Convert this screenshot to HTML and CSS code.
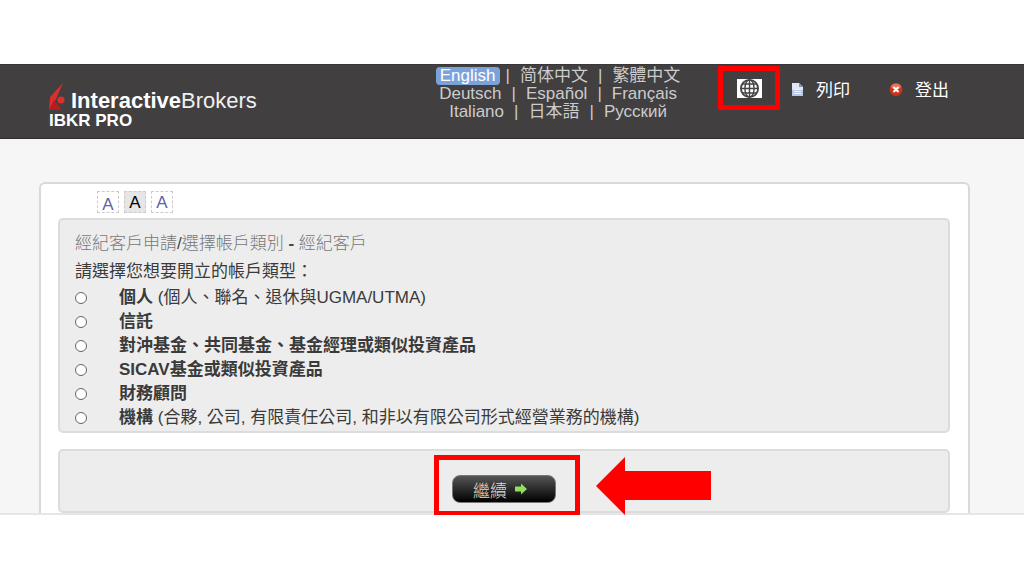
FILE: index.html
```html
<!DOCTYPE html>
<html lang="zh-Hant">
<head>
    <meta charset="UTF-8">
    <meta name="viewport" content="width=device-width, initial-scale=1.0">
    <title>InteractiveBrokers</title>
    <link rel="stylesheet" href="styles.css">
</head>
<body>
    <div class="app">
        <header class="header">
            <div class="logo">
                <div class="logo-main">
                    <svg class="logo-mark" viewBox="0 0 18 30" width="18" height="30">
                        <path d="M14 1 L1 15 L0 28 L7 17 Z" fill="#d8302f"/>
                        <path d="M0 28 L5 18 L13 28 Z" fill="#b51d20"/>
                        <circle cx="12" cy="18" r="3.6" fill="#d8302f"/>
                    </svg>
                    <span class="logo-text"><b>Interactive</b>Brokers</span>
                </div>
                <div class="logo-sub">IBKR PRO</div>
            </div>
            <nav class="languages">
                <div><a href="#" class="active">English</a><i>|</i><a href="#" lang="zh-Hans">简体中文</a><i>|</i><a href="#">繁體中文</a></div>
                <div><a href="#">Deutsch</a><i>|</i><a href="#">Español</a><i>|</i><a href="#">Français</a></div>
                <div><a href="#">Italiano</a><i>|</i><a href="#" lang="ja">日本語</a><i>|</i><a href="#">Русский</a></div>
            </nav>
            <div class="tools">
                <button type="button" class="globe" aria-label="Language">
                    <svg viewBox="0 0 25 19" width="25" height="19" fill="none" stroke="#444" stroke-width="1.4">
                        <circle cx="12.5" cy="9.5" r="8.6" stroke-width="1.8"/>
                        <ellipse cx="12.5" cy="9.5" rx="4.6" ry="8.6"/>
                        <path d="M12.5 1 V18 M4 9.5 H21 M5 5 H20 M5 14 H20"/>
                    </svg>
                    <span class="frame"></span>
                </button>
                <a href="#" class="tool print">
                    <svg viewBox="0 0 13 15" width="13" height="15">
                        <path d="M1 2 H8 L12 6 V15 H1 Z" fill="#dfe6f4"/>
                        <path d="M1 9 H12 V15 H1 Z" fill="#b9c7e4"/>
                        <path d="M8 2 V6 H12 Z" fill="#7f93bd"/>
                        <path d="M3 8.5 H9 M3 10.5 H10 M3 12.5 H10" stroke="#eef2fa" stroke-width="1"/>
                    </svg>
                    列印
                </a>
                <a href="#" class="tool logout">
                    <svg viewBox="0 0 14 15" width="14" height="15">
                        <circle cx="7" cy="8.5" r="6.5" fill="#c9351c"/>
                        <ellipse cx="7" cy="5.5" rx="5" ry="3" fill="#e2745a"/>
                        <path d="M4.5 6 L9.5 11 M9.5 6 L4.5 11" stroke="#fff" stroke-width="2"/>
                    </svg>
                    登出
                </a>
            </div>
        </header>

        <main class="content">
            <div class="font-sizes">
                <button type="button" class="small">A</button>
                <button type="button" class="selected">A</button>
                <button type="button">A</button>
            </div>

            <form action="#" method="post">
                <div class="panel types">
                    <div class="breadcrumb">經紀客戶申請<span>/</span>選擇帳戶類別 <b>-</b> 經紀客戶</div>
                    <div class="question">請選擇您想要開立的帳戶類型：</div>
                    <div class="option">
                        <input type="radio" name="type" id="individual">
                        <label for="individual"><b>個人</b> (個人、聯名、退休與UGMA/UTMA)</label>
                    </div>
                    <div class="option">
                        <input type="radio" name="type" id="trust">
                        <label for="trust"><b>信託</b></label>
                    </div>
                    <div class="option">
                        <input type="radio" name="type" id="fund">
                        <label for="fund"><b>對沖基金、共同基金、基金經理或類似投資產品</b></label>
                    </div>
                    <div class="option">
                        <input type="radio" name="type" id="sicav">
                        <label for="sicav"><b>SICAV基金或類似投資產品</b></label>
                    </div>
                    <div class="option">
                        <input type="radio" name="type" id="advisor">
                        <label for="advisor"><b>財務顧問</b></label>
                    </div>
                    <div class="option">
                        <input type="radio" name="type" id="organization">
                        <label for="organization"><b>機構</b> (合夥, 公司, 有限責任公司, 和非以有限公司形式經營業務的機構)</label>
                    </div>
                </div>

                <div class="panel actions">
                    <div class="continue-box">
                        <button type="submit" class="continue">
                            繼續
                            <svg viewBox="0 0 12 12" width="12" height="12">
                                <path d="M0 3.5 H6 V0.5 L12 6 L6 11.5 V8.5 H0 Z" fill="#8fe05a"/>
                            </svg>
                        </button>
                        <span class="frame"></span>
                        <svg class="pointer" viewBox="0 0 115 58" width="115" height="58">
                            <path d="M0 29 L29 0 V14 H115 V43 H29 V58 Z" fill="#f00"/>
                        </svg>
                    </div>
                </div>
            </form>
        </main>
    </div>
</body>
</html>
```

FILE: styles.css
```css
* {
    box-sizing: border-box;
}

body {
    font-family: "Liberation Sans", "Noto Sans CJK TC", sans-serif;
    font-size: 17px;
    color: #3a3a3a;
    background-color: white;
    margin: 0;
    padding: 64px 0 0;
}

.app {
    background-color: #f6f6f6;
    border-bottom: 2px solid #e6e6e6;
    box-shadow: 0 3px 6px rgba(0, 0, 0, 0.08);
}

/* Header */
.header {
    display: grid;
    grid-template-columns: 42% 25% 1fr;
    height: 75px;
    background-color: #413f40;
    border-top: 1px solid #383637;
    border-bottom: 1px solid #2e2c2d;
}

.header a {
    text-decoration: none;
}

.logo {
    padding: 17px 0 0 49px;
    color: white;
}

.logo-main {
    display: flex;
    align-items: flex-end;
    gap: 4px;
    height: 30px;
}

.logo-text {
    font-size: 22px;
    line-height: 22px;
    color: #f0f0f0;
}

.logo-text b {
    color: white;
}

.logo-sub {
    font-weight: bold;
    line-height: 17px;
}

.languages {
    padding-top: 2px;
    text-align: center;
    white-space: nowrap;
    line-height: 18px;
}

.languages div {
    height: 18px;
}

.languages a,
.languages i {
    color: #ccc;
    font-style: normal;
}

.languages i {
    margin: 0 10px;
}

.languages [lang="zh-Hans"] {
    font-family: "Liberation Sans", "Noto Sans CJK SC", sans-serif;
}

.languages [lang="ja"] {
    font-family: "Liberation Sans", "Noto Sans CJK JP", sans-serif;
}

.languages .active {
    display: inline-block;
    height: 18px;
    padding: 0 4px;
    border-radius: 4px;
    background-color: #7ba3da;
    color: white;
}

.languages .active + i {
    margin-left: 6px;
}

.tools {
    display: flex;
    align-items: center;
    height: 47px;
    padding-left: 51px;
}

.globe {
    position: relative;
    display: flex;
    padding: 0;
    border: none;
    background-color: white;
}

.frame {
    position: absolute;
    border: 5px solid #f00;
}

.globe .frame {
    inset: -13px -18px -12px -19px;
}

.tool {
    display: flex;
    align-items: center;
    gap: 12px;
    color: white;
}

.print {
    margin-left: 29px;
}

.logout {
    margin-left: 39px;
}

/* Content */
.content {
    margin: 43px 54px 0 39px;
    padding: 7px 18px 0 17px;
    background-color: white;
    border: 2px solid #d9d9d9;
    border-bottom: none;
    border-radius: 6px 6px 0 0;
}

.font-sizes {
    display: flex;
    gap: 5px;
    padding-left: 39px;
    margin-bottom: 5px;
}

.font-sizes button {
    width: 22px;
    height: 22px;
    padding: 2px 0 0;
    border: 1px dashed #ccc;
    background-color: white;
    color: #5a66a5;
    font-family: inherit;
    font-size: 17px;
    line-height: 18px;
}

.font-sizes .small {
    padding-top: 6px;
    line-height: 14px;
}

.font-sizes .selected {
    background-color: #e6e6e6;
    color: black;
}

.panel {
    border: 2px solid #dcdcdc;
    border-radius: 5px;
    background-color: #ededed;
}

.types {
    padding: 10px 15px 1px;
    margin-bottom: 16px;
}

.breadcrumb {
    line-height: 28px;
    font-weight: 300;
    color: #777;
}

.breadcrumb span,
.breadcrumb b {
    color: #444;
}

.breadcrumb b {
    font-weight: bold;
}

.question {
    line-height: 28px;
}

.option {
    display: flex;
    align-items: center;
    gap: 32px;
    height: 24px;
    line-height: 24px;
}

.option input {
    appearance: none;
    width: 12px;
    height: 12px;
    margin: 0;
    border: 1px solid #666;
    border-radius: 50%;
    background-color: white;
}

.option input:checked {
    background-color: #333;
}

.actions {
    display: flex;
    justify-content: center;
    padding: 24px 0 8px;
}

.continue-box {
    position: relative;
}

.continue {
    display: flex;
    align-items: center;
    justify-content: center;
    gap: 8px;
    width: 104px;
    height: 28px;
    padding: 0 8px 0 0;
    border: 1px solid #777;
    border-radius: 8px;
    background: linear-gradient(#555, #000);
    color: #ddd;
    font-family: inherit;
    font-size: 17px;
    font-weight: 300;
    cursor: pointer;
}

/* Red marks around the button */
.continue-box .frame {
    inset: -20px -24px -13px -18px;
}

.pointer {
    position: absolute;
    left: 144px;
    top: -18px;
}
```
